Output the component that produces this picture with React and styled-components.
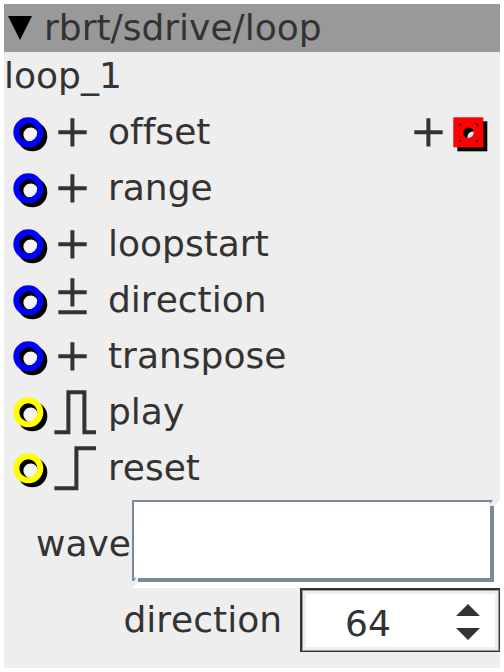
import React from "react";
import styled, { createGlobalStyle } from "styled-components";

const inlets = [
  { label: "offset", color: "#0000ff", icon: "plus", outlet: true },
  { label: "range", color: "#0000ff", icon: "plus" },
  { label: "loopstart", color: "#0000ff", icon: "plus" },
  { label: "direction", color: "#0000ff", icon: "plusminus" },
  { label: "transpose", color: "#0000ff", icon: "plus" },
  { label: "play", color: "#ffff00", icon: "pulse" },
  { label: "reset", color: "#ffff00", icon: "rising" },
];

// Signal type drawings, all on a 44 x 56 grid
const signals = {
  plus: "M6.3 28.3H34.7M20.4 14.2V42.5",
  plusminus: "M6.3 20.3H34.7M20.4 6.2V34.5M6.3 40.3H34.7",
  pulse: "M2.4 48.3H16.4V8.3H32.4V48.3H44",
  rising: "M2.4 48.3H24.4V8.3H44",
};

const Signal = ({ type }) => (
  <SignalSvg viewBox="0 0 44 56">
    <path d={signals[type]} />
  </SignalSvg>
);

const Inlet = ({ color }) => (
  <JackSvg viewBox="0 0 40 56">
    <circle cx="20.3" cy="32.3" r="15" fill="#000" />
    <circle cx="18.6" cy="30.6" r="7.2" fill="#f4f4f4" />
    <circle cx="16.3" cy="28.3" r="12" stroke={color} />
  </JackSvg>
);

const Outlet = () => (
  <JackSvg viewBox="0 0 40 56">
    <rect x="5.3" y="17.3" width="30" height="30" fill="#000" />
    <rect x="1.3" y="13.3" width="30" height="30" fill="#f00" />
    <path
      fill="#000"
      d="M7 19.5h3l-3 3zM26 19.5h-3l3 3zM7 38h3l-3-3zM26 38h-3l3-3z"
    />
    <circle cx="16.5" cy="28.7" r="5.3" fill="#000" />
    <path fill="#eee" d="M21.7 27.5A5.3 5.3 0 0 1 15.6 33.9C15 30.5 17.5 27.3 21.7 27.5z" />
  </JackSvg>
);

const App = () => {
  return (
    <>
      <GlobalStyle />
      <Panel>
        <Header>
          <Arrow viewBox="0 0 28 24">
            <path d="M0 0H24L12 24z" />
          </Arrow>
          <Text>rbrt/sdrive/loop</Text>
        </Header>
        <Name>loop_1</Name>
        {inlets.map(({ label, color, icon, outlet }) => (
          <Row key={label}>
            <Inlet color={color} />
            <Signal type={icon} />
            <RowLabel>{label}</RowLabel>
            {outlet && (
              <Output>
                <Signal type="plus" />
                <Outlet />
              </Output>
            )}
          </Row>
        ))}
        <WaveRow>
          <WaveLabel>wave</WaveLabel>
          <WaveField>
            <WaveInput />
          </WaveField>
        </WaveRow>
        <DirectionRow>
          <DirectionLabel>direction</DirectionLabel>
          <NumberBox>
            <Value>64</Value>
            <Spinner viewBox="0 0 24 36">
              <path d="M0 12L12 0L24 12zM0 24H24L12 36z" />
            </Spinner>
          </NumberBox>
        </DirectionRow>
      </Panel>
    </>
  );
};

export default App;

const GlobalStyle = createGlobalStyle`
  body {
    margin: 0;
    background: #fff;
  }
  * {
    box-sizing: border-box;
  }
`;

const Panel = styled.div`
  width: 496px;
  height: 664px;
  margin: 4px;
  background: #eee;
  color: #333;
  font-family: "DejaVu Sans", sans-serif;
  font-size: 36px;
  font-kerning: none;
  font-variant-ligatures: none;
  line-height: 48px;
  white-space: nowrap;
`;

const Header = styled.header`
  display: flex;
  height: 48px;
  padding-left: 4px;
  background: #999;
`;

const Arrow = styled.svg`
  width: 28px;
  height: 24px;
  margin: 12px 8px 0 0;
`;

const Text = styled.span`
  display: block;
`;

const Name = styled.div`
  height: 52px;
`;

// Jack, signal type and label of one inlet
const Row = styled.div`
  display: flex;
  height: 56px;
  padding-left: 8px;
`;

const JackSvg = styled.svg`
  width: 40px;
  height: 56px;
  fill: none;
  stroke-width: 6;
`;

const SignalSvg = styled.svg`
  width: 44px;
  height: 56px;
  fill: none;
  stroke: #333;
  stroke-width: 4;
`;

const RowLabel = styled.span`
  margin-left: 12px;
  line-height: 56px;
`;

const Output = styled.div`
  display: flex;
  margin-left: auto;
  padding-right: 8px;
`;

const WaveRow = styled.div`
  display: flex;
  justify-content: flex-end;
  height: 88px;
  margin-top: 4px;
`;

const WaveLabel = styled.span`
  margin-right: 1px;
  line-height: 88px;
`;

// Bevelled frame round the text field, mitred at two corners
const WaveField = styled.div`
  width: 368px;
  height: 88px;
  border-style: solid;
  border-color: #fff;
  border-width: 0 6px 6px 0;
  clip-path: polygon(
    0 0,
    361px 0,
    358px 4px,
    358px 6px,
    362px 6px,
    368px 0,
    368px 88px,
    0 88px,
    6px 82px,
    6px 78px,
    4px 78px,
    2px 81px,
    0 81px
  );
`;

const WaveInput = styled.div`
  height: 82px;
  border: solid #7b8a99;
  border-width: 2px 4px 4px 2px;
  background: #fff;
`;

const DirectionRow = styled.div`
  display: flex;
  justify-content: flex-end;
  height: 64px;
`;

const DirectionLabel = styled.span`
  margin-right: 18px;
  line-height: 64px;
`;

const NumberBox = styled.div`
  display: flex;
  align-items: center;
  width: 200px;
  height: 64px;
  padding: 7px 0 0 43px;
  border: solid #333;
  border-width: 2px 1px 1px 2px;
  box-shadow: inset 0 0 0 1px #999, inset 0 0 0 4px #eee;
  background: #fff;
`;

const Value = styled.span`
  width: 111px;
`;

const Spinner = styled.svg`
  width: 24px;
  height: 36px;
  margin-bottom: 4px;
  fill: #333;
`;
